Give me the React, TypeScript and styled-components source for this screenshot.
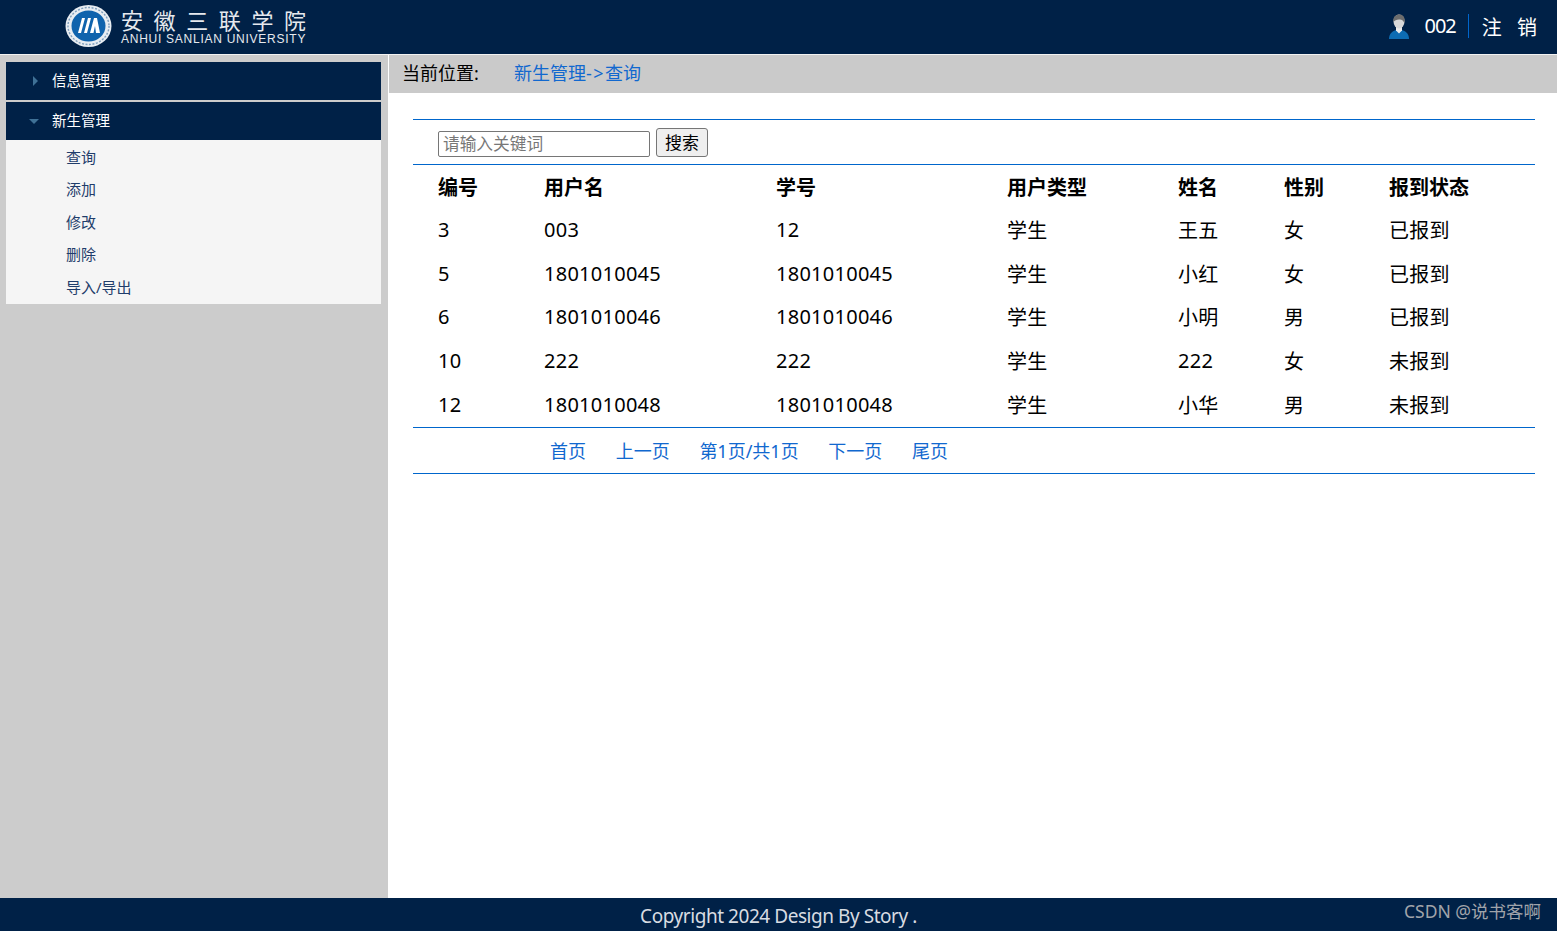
import React from "react";
import styled, { createGlobalStyle } from "styled-components";

const Global = createGlobalStyle`
  html, body { margin: 0; padding: 0; height: 100%; background: #fff; }
  body { font-family: "Noto Sans", "Noto Sans CJK SC", sans-serif; color: #000; overflow: hidden; }
`;
const NAVY = "#002147";
const BLUE = "#0066cc";

const Page = styled.div`display: flex; flex-direction: column; height: 931px; position: relative;`;
const Header = styled.header`
  flex: 0 0 54px; background: ${NAVY}; display: flex; align-items: center; justify-content: space-between;
  border-bottom: 1px solid #f2f2f2;
`;
const Brand = styled.div`display: flex; align-items: center; gap: 9px; padding: 0 0 2px 65px;`;
const BrandText = styled.div`display: flex; flex-direction: column; color: #e6e9ee; width: 185px;`;
const BrandCn = styled.div`
  font-family: "Noto Sans CJK JP", serif; font-weight: 400; font-size: 22px; line-height: 24px;
  display: flex; justify-content: space-between;
`;
const BrandEn = styled.div`
  font-family: "Liberation Sans", sans-serif; font-size: 12px; line-height: 13px; letter-spacing: .74px;
  white-space: nowrap; margin-top: 2px;
`;
const User = styled.div`display: flex; align-items: center; color: #fff; padding: 0 20px 2px 0; font-size: 20px;`;
const UserName = styled.span`
  margin-left: 15px; padding-right: 12px; border-right: 1px solid ${BLUE}; line-height: 24px; letter-spacing: -1px;
`;
const Logout = styled.span`margin-left: 13px; letter-spacing: 5px; margin-right: -5px;`;

const Body = styled.div`flex: 1; display: flex; min-height: 0;`;
const Side = styled.aside`flex: 0 0 388px; background: #ccc; padding: 7px 7px 0 6px; box-sizing: border-box;`;
const MenuHead = styled.div`
  height: 38px; background: ${NAVY}; color: #fff; display: flex; align-items: center; font-size: 14.5px;
  margin-bottom: 2px; position: relative; padding: 0 0 4px 46px; box-sizing: border-box;
`;
const Arrow = styled.i<{ $open?: boolean }>`
  position: absolute; width: 0; height: 0;
  ${(p) => p.$open
    ? `left: 23px; top: 17px; border-left: 5px solid transparent; border-right: 5px solid transparent; border-top: 5px solid #3f7196;`
    : `left: 27px; top: 14px; border-top: 5px solid transparent; border-bottom: 5px solid transparent; border-left: 5px solid #3f7196;`}
`;
const SubMenu = styled.div`background: #f5f5f5; margin-top: -2px; padding: 1px 0 0 60px; height: 164px; box-sizing: border-box;`;
const SubItem = styled.div`height: 32.4px; line-height: 32.4px; font-size: 15px; color: #1f3d6b;`;

const Main = styled.main`flex: 1; display: flex; flex-direction: column; margin-left: 1px; min-width: 0;`;
const Crumb = styled.div`
  height: 38px; background: #cacaca; display: flex; align-items: center; font-size: 18px; padding: 0 0 5px 13px; box-sizing: border-box;
`;
const CrumbLabel = styled.span`width: 112px;`;
const CrumbLink = styled.a`color: #1168cf;`;
const CrumbSep = styled.span`letter-spacing: 1.5px;`;
const Panel = styled.div`margin: 26px 22px 0 24px;`;
const Search = styled.div`
  border-top: 1px solid ${BLUE}; border-bottom: 1px solid ${BLUE};
  display: flex; align-items: flex-end; padding: 0 0 7px 25px; height: 37px; gap: 6px;
`;
const Input = styled.input`
  width: 212px; height: 26px; box-sizing: border-box; border: 1px solid #767676; border-radius: 2px; padding: 0 4px 3px;
  font: 16.7px "Noto Sans CJK SC", sans-serif; outline: none; background: #fff;
  &::placeholder { color: #777; opacity: 1; }
`;
const Button = styled.button`
  width: 52px; height: 29px; box-sizing: border-box; border: 1px solid #767676; border-radius: 3px; background: #efefef; padding: 0 0 2px;
  font: 17px "Noto Sans CJK SC", sans-serif; color: #000;
`;
const Table = styled.table`width: 100%; table-layout: fixed; border-collapse: collapse; font-size: 20px; letter-spacing: .26px;`;
const Th = styled.th<{ $w: number }>`
  width: ${(p) => p.$w}px; text-align: left; padding: 0 0 1px 25px; height: 44px; font-weight: 700; letter-spacing: 0; box-sizing: border-box;
`;
const Td = styled.td`padding: 0 0 2px 25px; height: 43.6px; white-space: nowrap; box-sizing: border-box;`;
const Pager = styled.div`
  border-top: 1px solid ${BLUE}; border-bottom: 1px solid ${BLUE}; height: 45px; display: flex; align-items: center; padding: 0 0 1px 137px;
  box-sizing: content-box; gap: 29.7px; font-size: 18px;
  height: 44px;
`;
const PageLink = styled.a`color: #1168cf;`;
const Footer = styled.footer`
  flex: 0 0 33px; background: ${NAVY}; color: #d8dce2; display: flex; align-items: center; justify-content: center;
  font-size: 19px; letter-spacing: -.45px; box-sizing: border-box; padding-top: 2px;
`;
const Watermark = styled.div`position: absolute; right: 16px; bottom: 8px; color: #a0a4aa; font-size: 17.5px; letter-spacing: 0;`;

const widths = [106, 232, 231, 171, 106, 105, 171];
const heads = ["编号", "用户名", "学号", "用户类型", "姓名", "性别", "报到状态"];
const rows = [
  ["3", "003", "12", "学生", "王五", "女", "已报到"],
  ["5", "1801010045", "1801010045", "学生", "小红", "女", "已报到"],
  ["6", "1801010046", "1801010046", "学生", "小明", "男", "已报到"],
  ["10", "222", "222", "学生", "222", "女", "未报到"],
  ["12", "1801010048", "1801010048", "学生", "小华", "男", "未报到"],
];
const menu = ["查询", "添加", "修改", "删除", "导入/导出"];
const pages = ["首页", "上一页", "第1页/共1页", "下一页", "尾页"];

const Logo = () => (
  <svg width="47" height="42" viewBox="0 0 47 42" aria-hidden>
    <ellipse cx="23.5" cy="21" rx="23" ry="21" fill="#e8edf2" />
    <ellipse cx="23.5" cy="21" rx="17" ry="15.5" fill="#0f63ad" />
    <ellipse cx="23.5" cy="21" rx="20.5" ry="18.5" fill="none" stroke="#7f9fbd" strokeWidth="1.4" strokeDasharray="2 1.5" />
    <path d="M13 28 L17 13 h3 L16 28 Z M19 28 L23 13 h3 L22 28 Z M25 28 L29 13 h3 L35 28 h-4 L30 21 L28.5 28 Z" fill="#fff" />
  </svg>
);
const Avatar = () => (
  <svg width="20" height="25" viewBox="0 0 20 25" aria-hidden>
    <path d="M0 25 C0 19 4 17 7 16 L13 16 C16 17 20 19 20 25 Z" fill="#0d6cb3" />
    <path d="M7 13 h6 v3.5 l-3 3 l-3 -3 Z" fill="#ececec" />
    <ellipse cx="10" cy="7.5" rx="5.5" ry="7" fill="#d8d8d8" />
    <path d="M4.5 8 C3.5 2 8 0 11 0.5 C15 1 16.5 5 15.5 9 C14 6 12 5 10 5.5 C7.5 5.5 5.5 6.5 4.5 8 Z" fill="#6d6d6d" />
  </svg>
);

export default function App() {
  return (
    <Page>
      <Global />
      <Header>
        <Brand>
          <Logo />
          <BrandText>
            <BrandCn>{"安徽三联学院".split("").map((c) => <span key={c}>{c}</span>)}</BrandCn>
            <BrandEn>ANHUI SANLIAN UNIVERSITY</BrandEn>
          </BrandText>
        </Brand>
        <User>
          <Avatar />
          <UserName>002</UserName>
          <Logout>注 销</Logout>
        </User>
      </Header>
      <Body>
        <Side>
          <MenuHead><Arrow />信息管理</MenuHead>
          <MenuHead><Arrow $open />新生管理</MenuHead>
          <SubMenu>{menu.map((m) => <SubItem key={m}>{m}</SubItem>)}</SubMenu>
        </Side>
        <Main>
          <Crumb>
            <CrumbLabel>当前位置:</CrumbLabel>
            <CrumbLink>新生管理<CrumbSep>-&gt;</CrumbSep>查询</CrumbLink>
          </Crumb>
          <Panel>
            <Search>
              <Input placeholder="请输入关键词" />
              <Button>搜索</Button>
            </Search>
            <Table>
              <thead>
                <tr>{heads.map((h, i) => <Th key={h} $w={widths[i]}>{h}</Th>)}</tr>
              </thead>
              <tbody>
                {rows.map((r) => (
                  <tr key={r[0]}>{r.map((c, i) => <Td key={i}>{c}</Td>)}</tr>
                ))}
              </tbody>
            </Table>
            <Pager>{pages.map((p) => <PageLink key={p}>{p}</PageLink>)}</Pager>
          </Panel>
        </Main>
      </Body>
      <Footer>Copyright 2024 Design By Story .</Footer>
      <Watermark>CSDN @说书客啊</Watermark>
    </Page>
  );
}
